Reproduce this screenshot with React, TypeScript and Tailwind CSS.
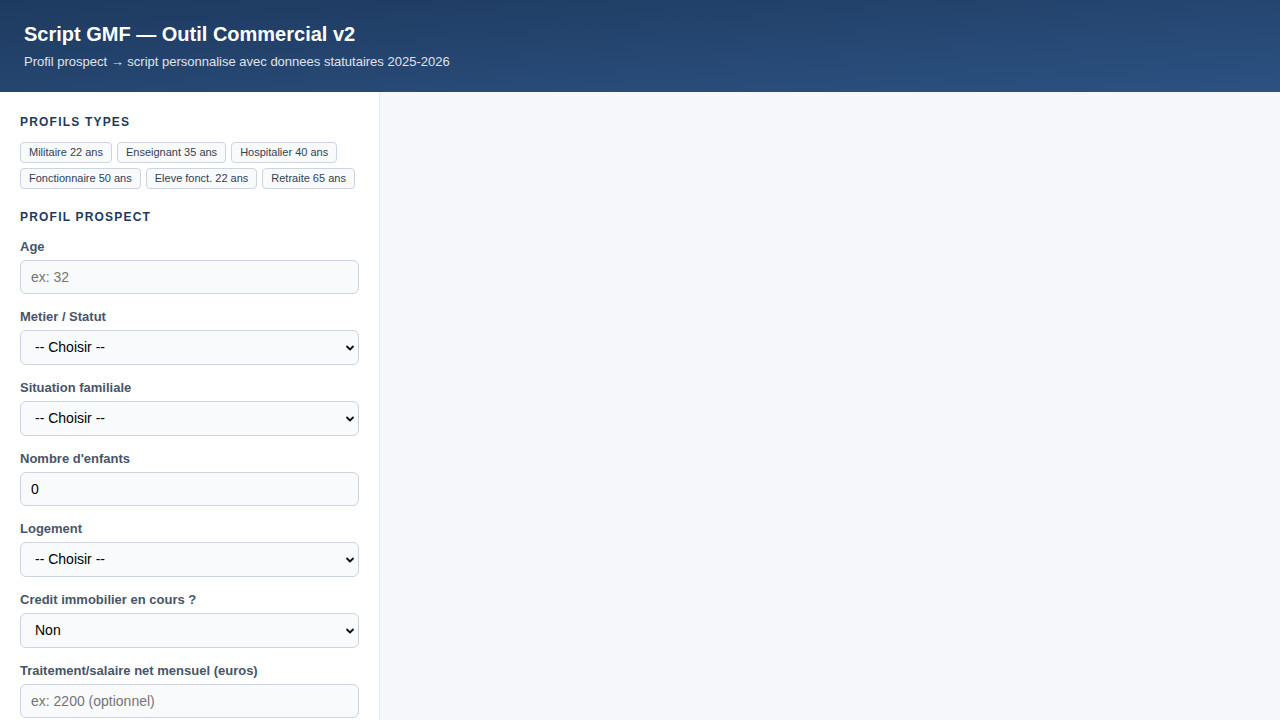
import React from 'react';

const presets = [
  'Militaire 22 ans',
  'Enseignant 35 ans',
  'Hospitalier 40 ans',
  'Fonctionnaire 50 ans',
  'Eleve fonct. 22 ans',
  'Retraite 65 ans',
];

const Label: React.FC<{ children: React.ReactNode }> = ({ children }) => (
  <label className="block text-[13px] leading-[15px] font-bold text-[#475569] mb-[6px]">{children}</label>
);

const inputCls =
  'w-full h-[34px] rounded-md border border-[#cbd5e1] bg-[#f8fafc] px-[10px] text-[14px] text-black placeholder:text-[#757575] outline-none';

const Select: React.FC<{ value: string; options: string[] }> = ({ value, options }) => (
  <div className="relative">
    <select
      defaultValue={value}
      className="w-full h-[35px] appearance-none rounded-md border border-[#cbd5e1] bg-[#f8fafc] pl-[14px] pr-8 text-[14px] text-black outline-none"
    >
      {options.map((o) => (
        <option key={o}>{o}</option>
      ))}
    </select>
    <svg
      className="pointer-events-none absolute right-[4px] top-1/2 -translate-y-1/2"
      width="10"
      height="10"
      viewBox="0 0 10 10"
    >
      <path d="M2 3.5 L5 6.5 L8 3.5" fill="none" stroke="#111" strokeWidth="1.8" strokeLinecap="round" strokeLinejoin="round" />
    </svg>
  </div>
);

export default function App() {
  return (
    <div className="h-screen flex flex-col overflow-hidden bg-[#f5f7fa] font-['Liberation_Sans',Arial,sans-serif]">
      <header className="h-[92px] shrink-0 flex flex-col justify-center px-6 bg-gradient-to-br from-[#1e3a5f] to-[#2c5282] text-white">
        <h1 className="text-[20px] leading-[24px] font-bold">Script GMF — Outil Commercial v2</h1>
        <p className="mt-[8px] text-[13px] leading-[16px] text-white/85">
          Profil prospect → script personnalise avec donnees statutaires 2025-2026
        </p>
      </header>

      <div className="flex-1 flex min-h-0">
        <aside className="w-[380px] shrink-0 bg-white border-r border-[#e2e8f0] overflow-hidden px-5 pt-[23px]">
          <h2 className="text-[12px] leading-[15px] font-bold uppercase tracking-[0.1em] text-[#1e3a5f]">Profils types</h2>
          <div className="mt-[12px] flex flex-wrap gap-[5px]">
            {presets.map((p) => (
              <button
                key={p}
                className="h-[21px] px-2 rounded border border-[#cbd5e1] bg-[#f8fafc] text-[11px] text-[#334155]"
              >
                {p}
              </button>
            ))}
          </div>

          <h2 className="mt-[21px] text-[12px] leading-[15px] font-bold uppercase tracking-[0.1em] text-[#1e3a5f]">Profil prospect</h2>

          <div className="mt-[14px] flex flex-col gap-[15px]">
            <div>
              <Label>Age</Label>
              <input className={inputCls} placeholder="ex: 32" />
            </div>
            <div>
              <Label>Metier / Statut</Label>
              <Select value="-- Choisir --" options={['-- Choisir --', 'Militaire', 'Enseignant', 'Hospitalier', 'Fonctionnaire']} />
            </div>
            <div>
              <Label>Situation familiale</Label>
              <Select value="-- Choisir --" options={['-- Choisir --', 'Celibataire', 'Marie', 'Pacse']} />
            </div>
            <div>
              <Label>Nombre d'enfants</Label>
              <input className={inputCls} defaultValue="0" />
            </div>
            <div>
              <Label>Logement</Label>
              <Select value="-- Choisir --" options={['-- Choisir --', 'Proprietaire', 'Locataire']} />
            </div>
            <div>
              <Label>Credit immobilier en cours ?</Label>
              <Select value="Non" options={['Non', 'Oui']} />
            </div>
            <div>
              <Label>Traitement/salaire net mensuel (euros)</Label>
              <input className={inputCls} placeholder="ex: 2200 (optionnel)" />
            </div>
          </div>
        </aside>
        <main className="flex-1" />
      </div>
    </div>
  );
}
